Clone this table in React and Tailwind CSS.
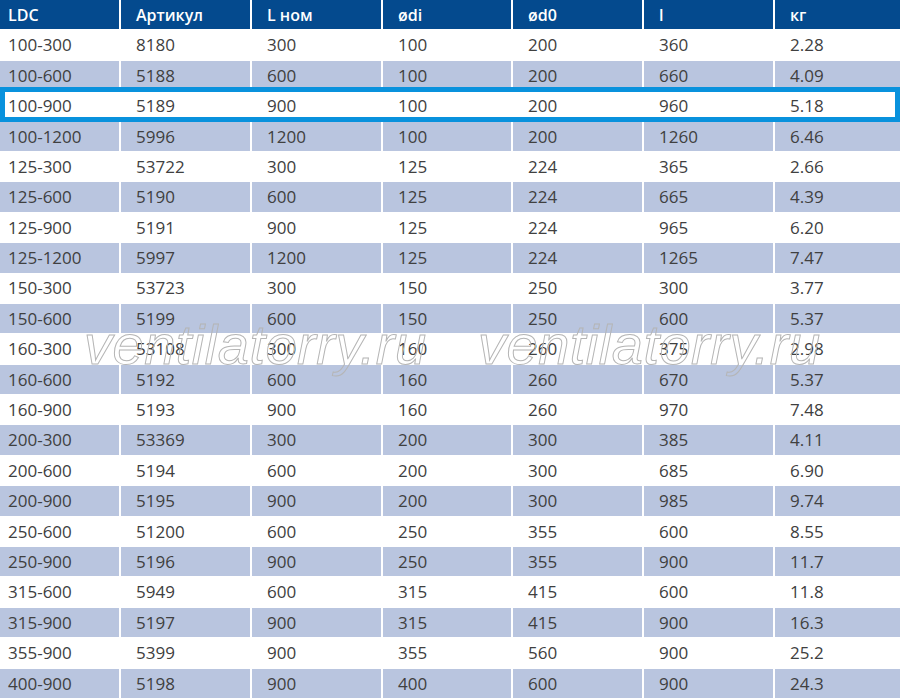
import React from "react";

const header = ["LDC", "Артикул", "L ном", "ødi", "ød0", "l", "кг"];
const rows = [
  ["100-300", "8180", "300", "100", "200", "360", "2.28"],
  ["100-600", "5188", "600", "100", "200", "660", "4.09"],
  ["100-900", "5189", "900", "100", "200", "960", "5.18"],
  ["100-1200", "5996", "1200", "100", "200", "1260", "6.46"],
  ["125-300", "53722", "300", "125", "224", "365", "2.66"],
  ["125-600", "5190", "600", "125", "224", "665", "4.39"],
  ["125-900", "5191", "900", "125", "224", "965", "6.20"],
  ["125-1200", "5997", "1200", "125", "224", "1265", "7.47"],
  ["150-300", "53723", "300", "150", "250", "300", "3.77"],
  ["150-600", "5199", "600", "150", "250", "600", "5.37"],
  ["160-300", "53108", "300", "160", "260", "375", "2.98"],
  ["160-600", "5192", "600", "160", "260", "670", "5.37"],
  ["160-900", "5193", "900", "160", "260", "970", "7.48"],
  ["200-300", "53369", "300", "200", "300", "385", "4.11"],
  ["200-600", "5194", "600", "200", "300", "685", "6.90"],
  ["200-900", "5195", "900", "200", "300", "985", "9.74"],
  ["250-600", "51200", "600", "250", "355", "600", "8.55"],
  ["250-900", "5196", "900", "250", "355", "900", "11.7"],
  ["315-600", "5949", "600", "315", "415", "600", "11.8"],
  ["315-900", "5197", "900", "315", "415", "900", "16.3"],
  ["355-900", "5399", "900", "355", "560", "900", "25.2"],
  ["400-900", "5198", "900", "400", "600", "900", "24.3"],
];

const gridCls =
  "grid grid-cols-[119px_129px_129px_128px_129px_129px_1fr] gap-x-[2px] flex-1 relative";

export default function App() {
  return (
    <div
      className="relative w-[900px] h-[698px] bg-white overflow-hidden"
      style={{ fontFamily: '"Open Sans", "Noto Sans", sans-serif' }}
    >
      <div className="flex flex-col gap-y-px h-[698px]">
        <div className={gridCls}>
          {header.map((h, i) => (
            <div
              key={i}
              className={`bg-[#044a8e] text-white text-[16px] font-semibold flex items-center ${
                i === 0 ? "pl-[8px]" : "pl-[15px]"
              }`}
            >
              {h}
            </div>
          ))}
        </div>
        {rows.map((r, ri) => {
          const shaded = ri % 2 === 1;
          return (
            <div key={ri} className={gridCls}>
              {r.map((c, ci) => (
                <div
                  key={ci}
                  className={`${
                    shaded ? "bg-[#b9c5df]" : "bg-white"
                  } text-[#404040] text-[17px] flex items-center ${
                    ci === 0 ? "pl-[8px]" : "pl-[15px]"
                  }`}
                >
                  {c}
                </div>
              ))}
              {ri === 2 && (
                <div className="absolute left-0 right-0 -top-[4px] -bottom-px border-[5px] border-[#0992dd] pointer-events-none" />
              )}
            </div>
          );
        })}
      </div>
      <div
        className="absolute top-[317px] left-[84px] text-[56px] tracking-[0.5px] italic leading-none text-transparent [-webkit-text-stroke:1px_#b5b5b5] pointer-events-none select-none"
        style={{ fontFamily: '"Liberation Sans", sans-serif' }}
      >
        ventilatorry.ru
      </div>
      <div
        className="absolute top-[317px] left-[478px] text-[56px] tracking-[0.5px] italic leading-none text-transparent [-webkit-text-stroke:1px_#b5b5b5] pointer-events-none select-none"
        style={{ fontFamily: '"Liberation Sans", sans-serif' }}
      >
        ventilatorry.ru
      </div>
    </div>
  );
}
